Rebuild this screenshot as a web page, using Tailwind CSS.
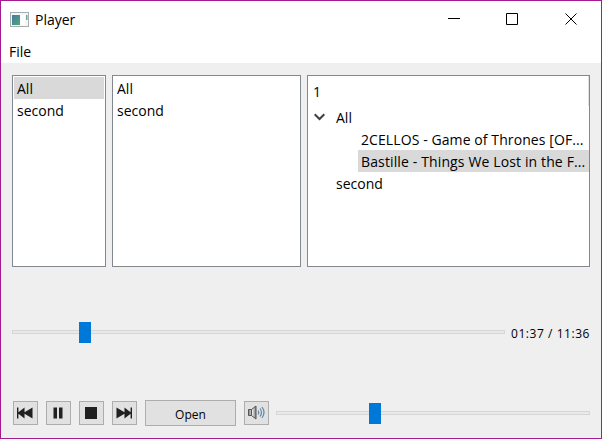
<!DOCTYPE html>
<html lang="en">
<head>
<meta charset="utf-8">
<title>Player</title>
<script src="https://cdn.jsdelivr.net/npm/@tailwindcss/browser@4"></script>
</head>
<body class="overflow-hidden">
<div class="flex h-[439px] w-[602px] flex-col border border-[#a31a91] bg-[#efefef] font-['Open_Sans','Noto_Sans',sans-serif] text-[14px] text-black whitespace-nowrap">
  <header class="flex h-[37px] shrink-0 items-center bg-white pl-[9px]">
    <svg class="mr-[6px] shrink-0" width="19" height="15" viewBox="0 0 19 15">
      <defs><linearGradient id="screen" x1="0" y1="0" x2="1" y2="1"><stop offset="0" stop-color="#4878a0"/><stop offset="1" stop-color="#50a878"/></linearGradient></defs>
      <rect x=".5" y=".5" width="18" height="14" fill="#f4f6f7" stroke="#a5adb1"/>
      <rect x="2" y="3" width="8" height="10" fill="url(#screen)"/>
      <path d="M11 3h4v10h-4z" fill="#fff"/><path d="M16 3h1.500v5H16z" fill="#69aaa0"/>
    </svg>
    <h1 class="grow">Player</h1>
    <svg class="mr-[23px]" width="130" height="14" viewBox="0 0 130 14" fill="none" stroke="#000">
      <path d="M0 5.500h12M58.500 .5h11v11h-11zM117.500 .5l11 11M128.500 .5l-11 11"/>
    </svg>
  </header>
  <nav class="flex h-[25px] shrink-0 items-center bg-white pt-[2px] pl-2"><span>File</span></nav>
  <main class="flex grow flex-col px-[11px] pt-3">
    <section class="flex h-[192px] shrink-0 gap-[6px]">
      <ul class="w-[94px] border border-[#828790] bg-white p-px leading-[24px]">
        <li class="h-[22px] bg-[#d9d9d9] pl-[3px]">All</li>
        <li class="h-[22px] pl-[3px]">second</li>
      </ul>
      <ul class="w-[189px] border border-[#828790] bg-white p-px leading-[24px]">
        <li class="h-[22px] pl-[3px]">All</li>
        <li class="h-[22px] pl-[3px]">second</li>
      </ul>
      <div class="w-[283px] border border-[#828790] bg-white leading-[24px]">
        <div class="h-[30px] border-r border-[#e0e0e0] pl-[5px] leading-[32px]">1</div>
        <div class="flex h-[22px] items-center pl-[6px]">
          <svg class="mr-[11px]" width="11" height="8" viewBox="0 0 11 8"><path d="M.7 1.200l4.800 4.800 4.800-4.800" fill="none" stroke="#404040" stroke-width="2"/></svg>
          <span class="pt-[2px]">All</span>
        </div>
        <div class="ml-[50px] h-[22px] pl-[3px] tracking-[0.09px]">2CELLOS - Game of Thrones [OF...</div>
        <div class="ml-[50px] h-[22px] bg-[#d9d9d9] pl-[3px] tracking-[0.13px]">Bastille - Things We Lost in the F...</div>
        <div class="h-[22px] pl-[28px]">second</div>
      </div>
    </section>
    <section class="mt-[55px] flex h-[21px] shrink-0 items-center gap-[6px]">
      <div class="flex h-[21px] w-[493px] items-center">
        <div class="mb-px h-[4px] w-[67px] border border-r-0 border-[#d6d6d6] bg-[#e7eaea]"></div>
        <div class="h-[21px] w-3 bg-[#0078d7]"></div>
        <div class="mb-px h-[4px] grow border border-l-0 border-[#d6d6d6] bg-[#e7eaea]"></div>
      </div>
      <span class="pt-[2px] text-[12px] tracking-[0.55px]">01:37 / 11:36</span>
    </section>
    <section class="mt-[57px] flex h-[26px] shrink-0 items-center gap-2 pl-px">
      <button class="flex h-6 w-[25px] items-center justify-center border border-[#adadad] bg-[#e1e1e1]"><svg class="mr-px" width="16" height="12" viewBox="0 0 17 12" preserveAspectRatio="none" fill="#202020"><path d="M0 .5h1.500v4.800L8 .5v4.800L16.500.5v11L8 6.700v4.800L1.500 6.700v4.800H0z"/></svg></button>
      <button class="flex h-6 w-[25px] items-center justify-center border border-[#adadad] bg-[#e1e1e1]"><svg class="mr-[1px]" width="10" height="12" viewBox="0 0 10 12" fill="#202020"><path d="M.5.500h3.500v11H.5zM6 .5h3.500v11H6z"/></svg></button>
      <button class="flex h-6 w-[25px] items-center justify-center border border-[#adadad] bg-[#e1e1e1]"><svg class="mr-px" width="12" height="12" viewBox="0 0 12 12"><path d="M0 0h12v12H0z" fill="#202020"/></svg></button>
      <button class="flex h-6 w-[25px] items-center justify-center border border-[#adadad] bg-[#e1e1e1]"><svg class="mr-px" width="16" height="12" viewBox="0 0 17 12" preserveAspectRatio="none" fill="#202020"><path d="M17 .5h-1.500v4.800L9 .5v4.800L.5.500v11L9 6.700v4.800l6.500-4.800v4.800H17z"/></svg></button>
      <button class="h-[26px] w-[91px] border border-[#adadad] bg-[#e1e1e1] pt-px text-[12px] leading-[25px]">Open</button>
      <button class="flex h-6 w-[25px] items-center justify-center border border-[#adadad] bg-[#e1e1e1]">
        <svg width="17" height="16" viewBox="0 0 17 16" fill="none">
          <defs><linearGradient id="cone"><stop stop-color="#777"/><stop offset=".5" stop-color="#eee"/><stop offset="1" stop-color="#777"/></linearGradient></defs>
          <path d="M.5 4.500h3L8 1v13l-4.500-3.500h-3z" fill="url(#cone)" stroke="#555"/><path d="M3.500 4.500v6" stroke="#555"/>
          <path d="M10 5.500q1.500 2 0 4M12 3.500q3 4 0 8M14 2q4 5.500 0 11" stroke="#5c86ab" stroke-width="1.200"/>
        </svg>
      </button>
      <div class="-ml-px flex h-[21px] w-[314px] items-center">
        <div class="mb-px h-[4px] w-[93px] border border-r-0 border-[#d6d6d6] bg-[#e7eaea]"></div>
        <div class="h-[21px] w-3 bg-[#0078d7]"></div>
        <div class="mb-px h-[4px] grow border border-l-0 border-[#d6d6d6] bg-[#e7eaea]"></div>
      </div>
    </section>
  </main>
</div>
</body>
</html>
